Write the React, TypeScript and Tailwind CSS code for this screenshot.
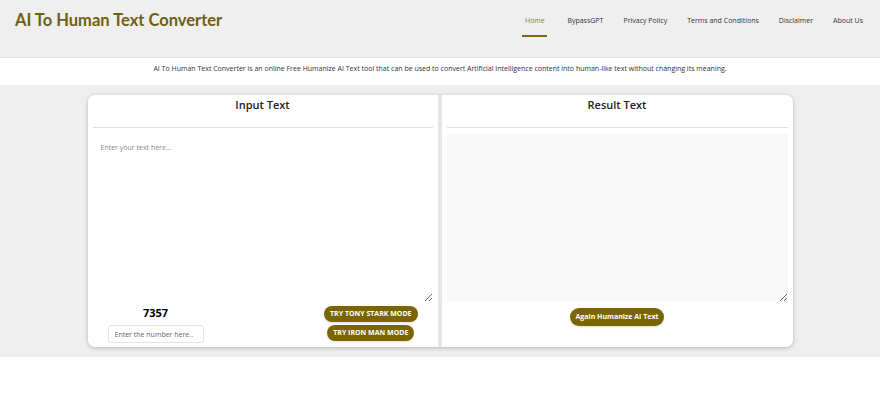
import React from "react";

const navItems = ["Home", "BypassGPT", "Privacy Policy", "Terms and Conditions", "Disclaimer", "About Us"];

function Header() {
  return (
    <header className="flex h-[57px] items-start justify-between bg-[#efefef] pl-[15px] pr-[17px]">
      <h1 className="mt-[8px] font-['Lato',sans-serif] text-[16.5px] font-bold leading-[24px] text-[#6e6010]">
        AI To Human Text Converter
      </h1>
      <nav className="mt-[15px] flex gap-[20px]">
        {navItems.map((item, i) => (
          <div key={item} className="flex flex-col items-center">
            <span className={i === 0 ? "text-[7px] leading-[12px] text-[#8c8244]" : "text-[7px] leading-[12px] text-[#333]"}>
              {item}
            </span>
            {i === 0 && <span className="mt-[8px] h-[2px] w-[25px] bg-[#7a6a0c]" />}
          </div>
        ))}
      </nav>
    </header>
  );
}

function Btn({ children, className = "" }: any) {
  return (
    <button className={"rounded-full bg-[#7a6500] px-[6px] text-[7px] font-bold leading-[16px] text-white shadow-sm " + className}>
      {children}
    </button>
  );
}

export default function App() {
  return (
    <div className="min-h-[420px] bg-white font-['Open_Sans',sans-serif]">
      <Header />
      <div className="flex h-[28px] justify-center border-t border-[#e4e4e4] bg-white pt-[5px]">
        <p className="text-[7px] leading-[12px] text-[#333]">
          AI To Human Text Converter is an online Free Humanize AI Text tool that can be used to convert Artificial Intelligence content into human-like text without changing its meaning.
        </p>
      </div>
      <main className="h-[272px] bg-[#efefef] pt-[10px]">
        <div className="mx-auto flex h-[252px] w-[705px] overflow-hidden rounded-[7px] bg-white shadow-[0_1px_4px_rgba(0,0,0,0.25)]">
          <section className="flex w-[350px] flex-col px-[5px]">
            <h2 className="pt-[2px] text-center text-[11px] font-semibold leading-[16px] text-[#222]">Input Text</h2>
            <div className="mt-[14px] h-px bg-[#dedede]" />
            <textarea
              className="mt-[6px] h-[168px] w-full resize-y px-[8px] pt-[9px] text-[7px] outline-none placeholder:text-[#888]"
              placeholder="Enter your text here..."
            />
            <div className="mt-[4px] flex justify-between pl-[15px] pr-[15px]">
              <div className="flex w-[96px] flex-col items-center">
                <span className="text-[11px] font-bold leading-[14px] text-black">7357</span>
                <input
                  className="mt-[5px] h-[18px] w-[96px] rounded-[3px] border border-[#e3e3e3] px-[6px] text-[7px] outline-none placeholder:text-[#666]"
                  placeholder="Enter the number here.."
                />
              </div>
              <div className="flex flex-col items-center gap-[3px]">
                <Btn>TRY TONY STARK MODE</Btn>
                <Btn>TRY IRON MAN MODE</Btn>
              </div>
            </div>
          </section>
          <div className="w-[4px] bg-[#e6e6e6]" />
          <section className="flex w-[351px] flex-col px-[5px]">
            <h2 className="pt-[2px] text-center text-[11px] font-semibold leading-[16px] text-[#222]">Result Text</h2>
            <div className="mt-[14px] h-px bg-[#dedede]" />
            <textarea className="mt-[6px] h-[168px] w-full resize-y bg-[#f8f8f8] outline-none" readOnly />
            <div className="mt-[6px] flex justify-center">
              <Btn className="px-[6px] leading-[18px]">Again Humanize AI Text</Btn>
            </div>
          </section>
        </div>
      </main>
    </div>
  );
}
